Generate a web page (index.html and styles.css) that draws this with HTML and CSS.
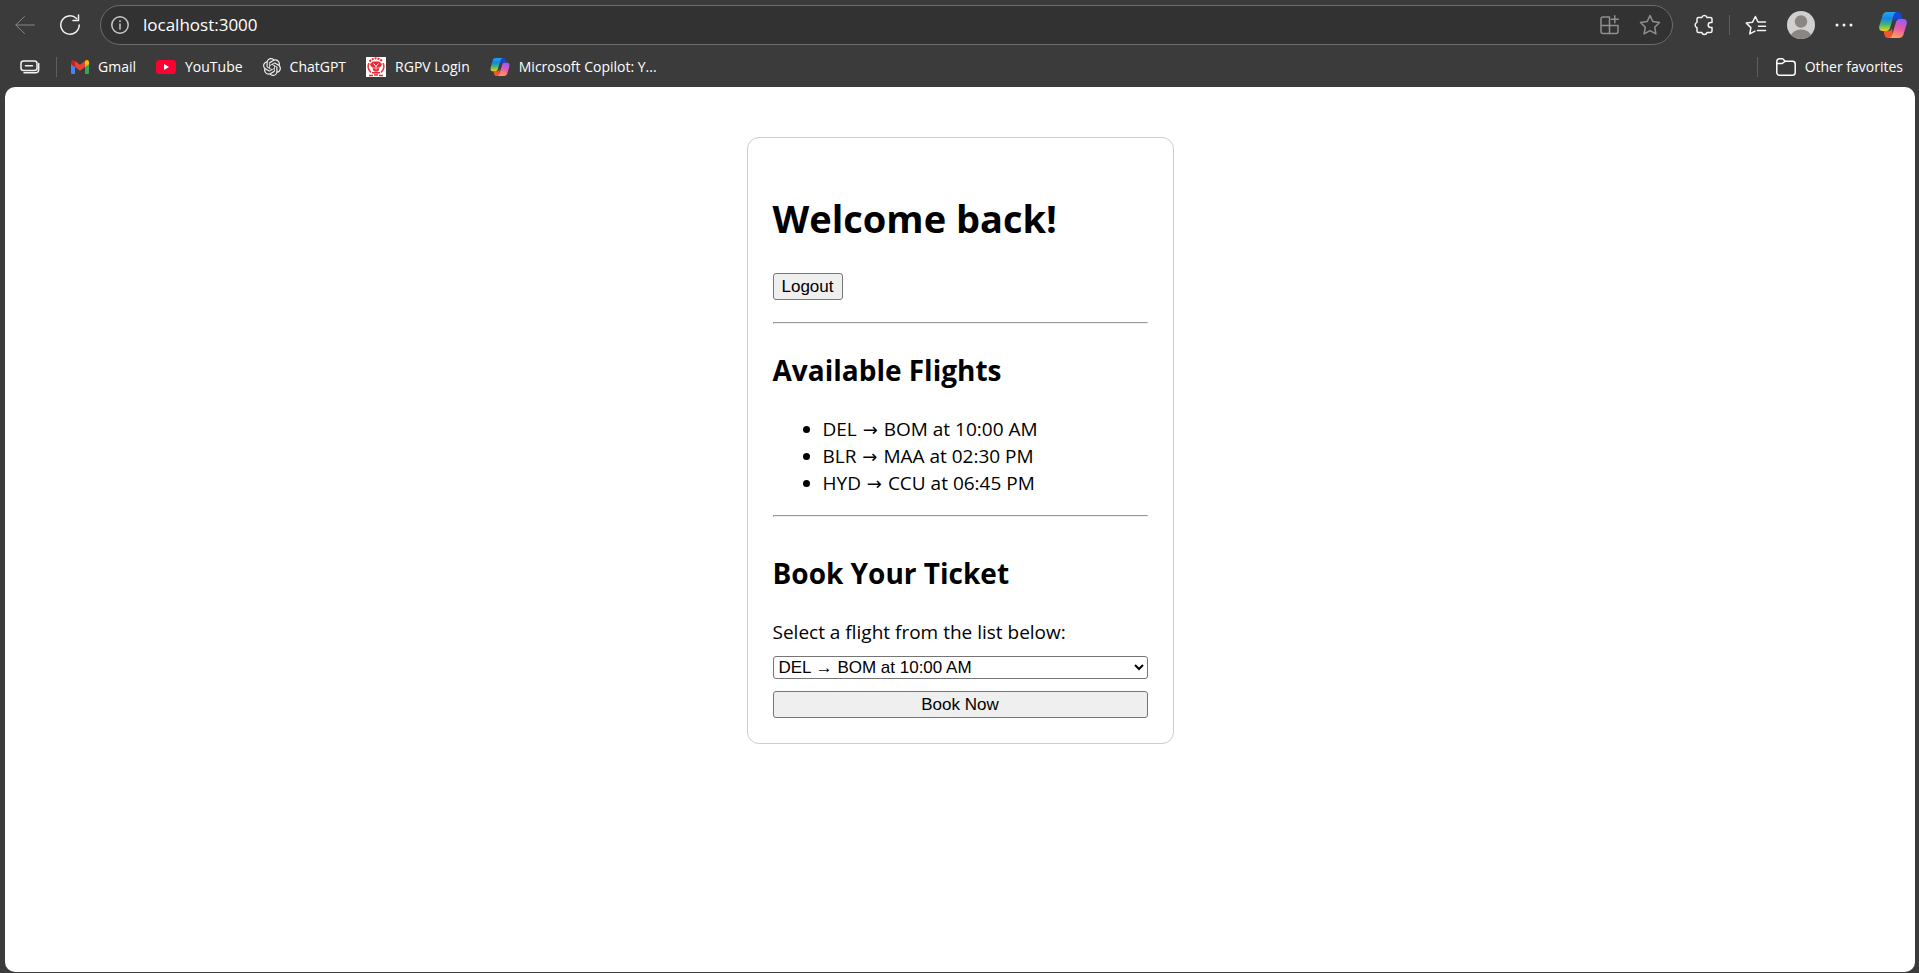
FILE: index.html
```html
<!DOCTYPE html>
<html lang="en">
<head>
<meta charset="utf-8">
<title>Flight Booking</title>
<link rel="stylesheet" href="styles.css">
</head>
<body>
<svg class="defs" aria-hidden="true">
  <defs>
    <linearGradient id="cp-cool" x1="0" y1="0" x2="0" y2="1">
      <stop offset="0" stop-color="#20a5f5"/><stop offset=".35" stop-color="#1786dc"/><stop offset=".65" stop-color="#3fb57c"/><stop offset="1" stop-color="#f2d312"/>
    </linearGradient>
    <linearGradient id="cp-warm" x1=".6" y1="0" x2=".3" y2="1">
      <stop offset="0" stop-color="#9a5bf0"/><stop offset=".45" stop-color="#e55aa8"/><stop offset="1" stop-color="#ffa05c"/>
    </linearGradient>
    <symbol id="copilot" viewBox="0 0 28 26">
      <path d="M14 0h5c2 0 3 1 3.500 3l1 4h-5c-2 0-3 1-3.500 3z" fill="#1747d1"/>
      <path d="M14 26H9c-2 0-3-1-3.500-3l-1-4h5c2 0 3-1 3.500-3z" fill="#f4552e"/>
      <path d="M8 0h10c-2 0-2.800 1.500-3.300 3.500L11 16c-.7 2-1.700 3-3.700 3H3.500C.7 19-.3 17 .3 14L3.500 3.500C4.200 1.200 5.500 0 8 0z" fill="url(#cp-cool)"/>
      <path d="M20 26H10c2 0 2.800-1.500 3.300-3.500L17 10c.7-2 1.700-3 3.700-3h3.800c2.800 0 3.800 2 3.200 5l-3.200 10.500c-.7 2.300-2 3.500-4.500 3.500z" fill="url(#cp-warm)"/>
    </symbol>
  </defs>
</svg>

<header class="browser">
  <div class="toolbar">
    <button class="icon-btn back" aria-label="Back">
      <svg width="20" height="20" viewBox="0 0 20 20" class="line"><path d="M19.500 10H.8M9.500 1.500.8 10l8.700 8.500"/></svg>
    </button>
    <button class="icon-btn reload" aria-label="Refresh">
      <svg width="22" height="22" viewBox="0 0 22 22" class="line bold"><path d="M17.500 4.500A9.200 9.200 0 1 0 20.200 11M19.500 1v5.500H14"/></svg>
    </button>
    <div class="address">
      <button class="icon-btn info" aria-label="Site information">
        <svg width="18" height="18" viewBox="0 0 18 18" class="line bold"><circle cx="9" cy="9" r="8.200"/><path d="M9 8v5M9 4.800v.6"/></svg>
      </button>
      <input class="url" type="text" value="localhost:3000" aria-label="Address">
      <button class="icon-btn dim" aria-label="App available">
        <svg width="20" height="20" viewBox="0 0 20 20" class="line bold"><path d="M9.500 2H3a2 2 0 0 0-2 2v12.500a2 2 0 0 0 2 2h13a2 2 0 0 0 2-2V10.500H1M9.500 2v16.500M14.800.8v7M11.300 4.300h7"/></svg>
      </button>
      <button class="icon-btn dim" aria-label="Add to favorites">
        <svg width="22" height="22" viewBox="0 0 22 22" class="line bold"><path d="m11 1.500 2.900 6.100 6.600.9-4.800 4.700 1.200 6.700L11 16.700 5.100 19.900l1.200-6.700L1.500 8.500l6.600-.9z"/></svg>
      </button>
    </div>
    <div class="actions">
      <button class="icon-btn" aria-label="Extensions">
        <svg width="20" height="22" viewBox="0 0 20 22" class="line bold"><path d="M4.500 3.500h3.300a2.700 2.700 0 0 1 5.200 0h3.500a1.500 1.500 0 0 1 1.500 1.500v3.600h-1.300a2.500 2.500 0 0 0 0 5H18V17a1.500 1.500 0 0 1-1.500 1.500H13a2.700 2.700 0 0 1-5.200 0H4.500A1.500 1.500 0 0 1 3 17v-3.200a2.900 2.900 0 0 1 0-5.400V5a1.500 1.500 0 0 1 1.500-1.500z"/></svg>
      </button>
      <span class="divider"></span>
      <button class="icon-btn" aria-label="Favorites">
        <svg width="22" height="20" viewBox="0 0 22 20" class="line bold"><path d="M20.500 7H13l-2.600-5.500-2.800 5.700-6.300.9 4.600 4.500-1.100 6.300 5.200-2.700M13.500 11.200h7M12.500 15.500h8"/></svg>
      </button>
      <button class="icon-btn" aria-label="Profile">
        <svg width="28" height="28" viewBox="0 0 28 28"><clipPath id="face"><circle cx="14" cy="14" r="14"/></clipPath><g clip-path="url(#face)"><path fill="#d2d0ce" d="M0 0h28v28H0z"/><circle cx="14" cy="10.500" r="6.200" fill="#8a8683"/><ellipse cx="14" cy="25.500" rx="10" ry="7" fill="#8a8683"/></g></svg>
      </button>
      <button class="icon-btn" aria-label="Settings and more">
        <svg width="18" height="4" viewBox="0 0 18 4" fill="#f3f3f3"><circle cx="2" cy="2" r="1.500"/><circle cx="9" cy="2" r="1.500"/><circle cx="16" cy="2" r="1.500"/></svg>
      </button>
      <button class="icon-btn copilot-btn" aria-label="Copilot"><svg width="28" height="26"><use href="#copilot"/></svg></button>
    </div>
  </div>

  <nav class="favorites" aria-label="Favorites bar">
    <button class="icon-btn tabs" aria-label="Workspaces">
      <svg width="20" height="14" viewBox="0 0 20 14" class="line bold"><rect x="1" y="1" width="16" height="9.500" rx="2.500"/><path d="M5.500 5.800h7M18.700 3.500v6a3.300 3.300 0 0 1-3.300 3.300H4"/></svg>
    </button>
    <span class="divider"></span>
    <a class="fav" href="#"><svg width="18" height="14" viewBox="0 0 18 14"><path fill="#4285f4" d="M0 3v9.700C0 13.400.6 14 1.300 14H4V5z"/><path fill="#34a853" d="M18 3v9.700c0 .7-.6 1.300-1.300 1.300H14V5z"/><path fill="#ea4335" d="M4 7V1l5 3.800L14 1v6l-5 3.800z"/><path fill="#c5221f" d="M0 2v2.200L4 7V1L3.200.5C1.900-.5 0 .4 0 2z"/><path fill="#fbbc04" d="M14 1v6l4-2.800V2c0-1.600-1.900-2.500-3.200-1.500z"/></svg>Gmail</a>
    <a class="fav" href="#"><svg width="20" height="14" viewBox="0 0 20 14"><rect width="20" height="14" rx="3.500" fill="#ff0033"/><path fill="#fff" d="m8 4 5 3-5 3z"/></svg>YouTube</a>
    <a class="fav" href="#"><svg width="18" height="18" viewBox="0 0 24 24" fill="#eee"><path d="M22.280 9.820a5.980 5.980 0 0 0-.52-4.910 6.050 6.050 0 0 0-6.510-2.900A6.070 6.070 0 0 0 4.980 4.180a5.980 5.980 0 0 0-4 2.900 6.050 6.050 0 0 0 .74 7.100 5.980 5.980 0 0 0 .51 4.910 6.050 6.050 0 0 0 6.520 2.900A5.980 5.980 0 0 0 13.260 24a6.060 6.060 0 0 0 5.770-4.210 5.990 5.990 0 0 0 4-2.900 6.060 6.060 0 0 0-.75-7.070zm-9.020 12.610a4.480 4.480 0 0 1-2.880-1.040l.14-.08 4.780-2.760a.8.8 0 0 0 .39-.68v-6.740l2.020 1.170a.07.07 0 0 1 .04.05v5.580a4.500 4.500 0 0 1-4.490 4.500zM3.600 18.300a4.470 4.470 0 0 1-.54-3.010l.14.09 4.780 2.760a.77.77 0 0 0 .78 0l5.840-3.370v2.330a.08.08 0 0 1-.03.06L9.740 19.950A4.500 4.500 0 0 1 3.600 18.300zM2.340 7.900A4.490 4.490 0 0 1 4.710 5.920v5.680a.77.77 0 0 0 .39.680l5.810 3.350-2.020 1.170a.08.08 0 0 1-.07 0l-4.830-2.790A4.500 4.500 0 0 1 2.340 7.900zm16.600 3.860-5.840-3.390L15.120 7.200a.08.08 0 0 1 .07 0l4.830 2.790a4.490 4.490 0 0 1-.68 8.100v-5.680a.79.79 0 0 0-.4-.66zm2.010-3.030-.14-.08-4.770-2.780a.78.78 0 0 0-.79 0L9.410 9.230V6.900a.07.07 0 0 1 .03-.06l4.830-2.790a4.500 4.500 0 0 1 6.680 4.660zM8.310 12.860l-2.020-1.160a.08.08 0 0 1-.04-.06V6.070a4.500 4.500 0 0 1 7.380-3.450l-.14.080L8.700 5.460a.79.790 0 0 0-.39.680zm1.100-2.360 2.600-1.500 2.610 1.500v3l-2.600 1.500-2.610-1.500z"/></svg>ChatGPT</a>
    <a class="fav" href="#"><svg width="20" height="20" viewBox="0 0 20 20"><path fill="#fff" d="M0 0h20v20H0z"/><path d="M5 15.500A8 8 0 0 1 3 6M15 15.500A8 8 0 0 0 17 6" fill="none" stroke="#f0303a" stroke-width="1.500"/><path d="M3.500 4.500Q10-2 16.500 4.500" fill="none" stroke="#ec2630" stroke-width="2" stroke-dasharray="2 1"/><path d="M3 18.500h4M8 18h4M13 18.500h4M6 15.800h8" fill="none" stroke="#ec2630" stroke-width="1.500"/><path fill="#ec2630" d="M4 7l3-2.500h6L16 7l-1 2.500-1.500.5-.5 3-1.500 1.500h-3L7 13l-.5-3L5 9.500z"/><path d="M7.500 6.500 10 9.500l2.500-3M10 9.500v3M8 10.500v1M12 10.500v1" fill="none" stroke="#fff"/></svg>RGPV Login</a>
    <a class="fav" href="#"><svg width="20" height="18" viewBox="0 0 28 26"><use href="#copilot"/></svg>Microsoft Copilot: Y...</a>
    <span class="divider last"></span>
    <a class="fav other" href="#"><svg width="20" height="18" viewBox="0 0 20 18" class="line bold"><path d="M.8 3.500A2.700 2.700 0 0 1 3.500.8h3.200L9.200 3.200h7.300a2.700 2.700 0 0 1 2.700 2.700v8.600a2.700 2.700 0 0 1-2.700 2.700h-13a2.700 2.700 0 0 1-2.700-2.700zM.8 5.500h5.500l2.900-2.300"/></svg>Other favorites</a>
  </nav>
</header>

<main class="page">
  <section class="card">
    <h1>Welcome back!</h1>
    <button class="btn logout">Logout</button>
    <hr>
    <h2>Available Flights</h2>
    <ul class="flights">
      <li>DEL <span class="arrow">→</span> BOM at 10:00 AM</li>
      <li>BLR <span class="arrow">→</span> MAA at 02:30 PM</li>
      <li>HYD <span class="arrow">→</span> CCU at 06:45 PM</li>
    </ul>
    <hr>
    <form class="booking">
      <h2>Book Your Ticket</h2>
      <label for="flight">Select a flight from the list below:</label>
      <select id="flight">
        <option>DEL → BOM at 10:00 AM</option>
        <option>BLR → MAA at 02:30 PM</option>
        <option>HYD → CCU at 06:45 PM</option>
      </select>
      <button class="btn" type="button">Book Now</button>
    </form>
  </section>
</main>
</body>
</html>
```

FILE: styles.css
```css
* { box-sizing: border-box; }

body {
  margin: 0;
  min-height: 100vh;
  display: flex;
  flex-direction: column;
  background: #3b3b3b;
  color: #000;
  font-family: "Open Sans", "Noto Sans", sans-serif;
}

.defs { position: absolute; width: 0; height: 0; }

/* Browser chrome */
.toolbar { display: flex; align-items: center; padding: 5px 12px 0 15px; }

.icon-btn {
  display: flex;
  padding: 0;
  border: 0;
  background: none;
  color: #f3f3f3;
}

.line { fill: none; stroke: currentColor; stroke-linecap: round; stroke-linejoin: round; }
.line.bold { stroke-width: 1.5; }

.back { color: #858585; margin-right: 24px; }
.reload { margin-right: 19px; }

.address {
  flex: 1;
  display: flex;
  align-items: center;
  gap: 19px;
  height: 40px;
  padding: 0 11px 0 10px;
  border: 1px solid #6c6c6c;
  border-radius: 20px;
  background: #323232;
}
.address .info { color: #c8c8c8; margin-right: -5px; }
.dim { color: #8f8f8f; }

.url {
  flex: 1;
  min-width: 0;
  padding: 0;
  border: 0;
  outline: 0;
  background: none;
  color: #fff;
  font: 17px/24px "Open Sans", sans-serif;
}

.actions { display: flex; align-items: center; gap: 20px; margin-left: 21px; }
.actions .divider { margin: 0 -5px 0 -5px; }
.copilot-btn { margin-left: 6px; }

.divider { width: 1px; height: 20px; background: #5e5e5e; }

.favorites {
  display: flex;
  align-items: center;
  height: 42px;
  padding: 2px 16px 0 20px;
}
.tabs { margin-right: 16px; }
.favorites .divider { margin-right: 14px; }

.fav {
  display: flex;
  align-items: center;
  gap: 9px;
  margin-right: 20px;
  color: #fff;
  font-size: 14px;
  line-height: 20px;
  text-decoration: none;
  white-space: nowrap;
}
.favorites .last { margin: 0 18px 0 auto; }
.other { margin-right: 0; }

/* Page */
.page {
  flex: 1;
  margin: 0 4px 1px 5px;
  padding: 50px 20px;
  border-radius: 10px;
  background: #fff;
}

.card {
  max-width: 427px;
  margin: 0 auto;
  padding: 25px;
  border: 1px solid #ccc;
  border-radius: 12px;
  font-size: 19px;
  line-height: 27px;
}

h1 { margin: 29px 0 28px; font-size: 38px; line-height: 53px; }
h2 { margin: 26px 0; font-size: 28px; line-height: 40px; }
hr { margin: 18px 0 20px; border: 1px solid; border-color: #9a9a9a #eee #eee #9a9a9a; }

.flights { margin: 26px 0 18px; padding-left: 50px; }
.arrow { margin: 0 1px; font: 18px/1 "DejaVu Sans", sans-serif; }

.btn, select {
  font: 17px/19px "Liberation Sans", Arial, sans-serif;
  border: 1px solid #767676;
  border-radius: 3px;
  color: #000;
}
.btn { display: block; padding: 3px 8px; background: #efefef; }
.logout { margin-bottom: 22px; }

.booking { display: flex; flex-direction: column; }
.booking h2 { margin-top: 16px; }
select { margin: 10px 0 12px; height: 23px; padding: 0 1px; background: #fff; }
```
